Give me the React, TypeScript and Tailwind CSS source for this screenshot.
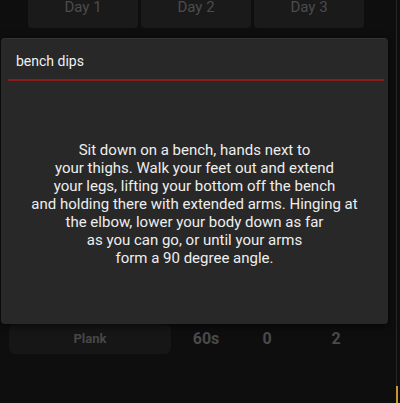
import { useState } from "react";

const days = ["Day 1", "Day 2", "Day 3"];

const description = [
  "Sit down on a bench, hands next to",
  "your thighs. Walk your feet out and extend",
  "your legs, lifting your bottom off the bench",
  "and holding there with extended arms. Hinging at",
  "the elbow, lower your body down as far",
  "as you can go, or until your arms",
  "form a 90 degree angle.",
];

export default function App() {
  const [open] = useState(true);

  return (
    <div className="relative h-[403px] w-[400px] overflow-hidden bg-[#0e0e0e] font-['Roboto',sans-serif]">
      {/* page underneath */}
      <div className="flex h-full flex-col">
        <div className="-mt-[14px] flex gap-[3px] pl-[28px]">
          {days.map((d) => (
            <div
              key={d}
              className="flex h-[42px] w-[110px] items-center justify-center rounded-sm bg-[#1a1a1a] text-[15px] text-[#4c4c4c]"
            >
              {d}
            </div>
          ))}
        </div>

        <div className="mt-[296px] flex items-center pl-[9px]">
          <div className="flex h-[30px] w-[162px] items-center justify-center rounded-md bg-[#161616] text-[13px] font-bold text-[#474747]">
            Plank
          </div>
          <div className="w-[70px] text-center text-[16px] font-bold text-[#4a4a4a]">60s</div>
          <div className="w-[52px] text-center text-[16px] font-bold text-[#4a4a4a]">0</div>
          <div className="w-[86px] text-center text-[16px] font-bold text-[#4a4a4a]">2</div>
        </div>
      </div>

      {/* scrollbar */}
      <div className="absolute right-[3px] top-0 h-full w-px bg-[#262626]" />
      <div className="absolute right-[2px] bottom-0 h-[17px] w-[2px] bg-[#c8962a]" />

      {open && (
        <div className="absolute left-[1px] top-[38px] flex h-[286px] w-[387px] flex-col rounded-sm border-t border-[#333] bg-[#282828] shadow-[0_2px_8px_rgba(0,0,0,0.6)]">
          <div className="pl-[15px] pt-[13px] text-[14px] leading-[18px] text-[#f0f0f0]">bench dips</div>
          <div className="ml-[7px] mr-[4px] mt-[9px] h-[2px] bg-[#8b1a1a]" />
          <div className="flex flex-1 items-center justify-center pt-[2px]">
            <p className="text-center text-[15px] leading-[18px] text-[#eeeeee]">
              {description.map((line, i) => (
                <span key={i} className="block">
                  {line}
                </span>
              ))}
            </p>
          </div>
        </div>
      )}
    </div>
  );
}
